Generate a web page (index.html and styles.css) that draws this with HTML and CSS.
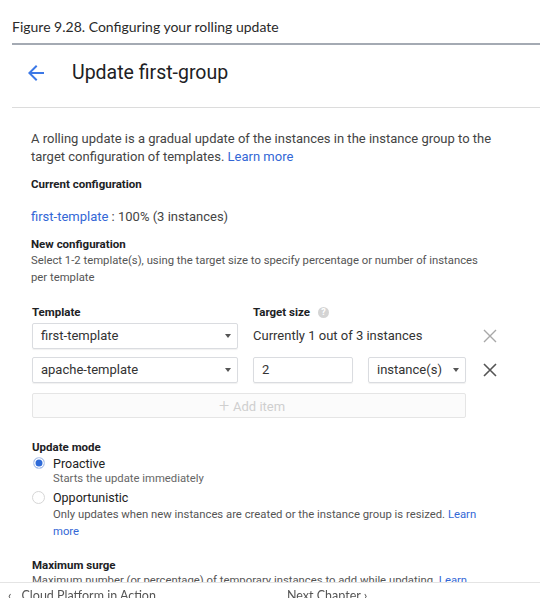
FILE: index.html
```html
<!DOCTYPE html>
<html lang="en">
<head>
<meta charset="utf-8">
<title>Update first-group</title>
<link rel="stylesheet" href="styles.css">
</head>
<body>
<div class="caption">Figure 9.28. Configuring your rolling update</div>
<div class="rule"></div>
<div class="header">
  <svg class="back" width="24" height="24" viewBox="0 0 24 24"><path d="M20 11H7.83l5.59-5.59L12 4l-8 8 8 8 1.41-1.41L7.83 13H20v-2z" fill="#3b78e7"/></svg>
  <h1 class="title">Update first-group</h1>
</div>
<main class="content">
  <p class="intro">A rolling update is a gradual update of the instances in the instance group to the target configuration of templates. <a class="link">Learn more</a></p>
  <div class="label label-current">Current configuration</div>
  <p class="current"><a class="link">first-template</a> : 100% (3 instances)</p>
  <div class="label label-new">New configuration</div>
  <p class="desc desc-new">Select 1-2 template(s), using the target size to specify percentage or number of instances per template</p>

  <div class="grid">
    <div class="label">Template</div>
    <div class="label target-label">Target size <span class="help">?</span></div>
    <div></div>

    <div class="select"><span>first-template</span><span class="caret"></span></div>
    <div class="current-size">Currently 1 out of 3 instances</div>
    <div class="x"><svg width="14" height="14" viewBox="0 0 14 14"><path d="M1 1L13 13M13 1L1 13" stroke="#a8a8a8" stroke-width="1.4"/></svg></div>

    <div class="select"><span>apache-template</span><span class="caret"></span></div>
    <div class="input">2</div>
    <div class="select"><span>instance(s)</span><span class="caret"></span></div>
    <div class="x"><svg width="14" height="14" viewBox="0 0 14 14"><path d="M1 1L13 13M13 1L1 13" stroke="#555" stroke-width="1.6"/></svg></div>

    <div class="add"><span class="plus">+</span>Add item</div>
  </div>

  <div class="label label-mode">Update mode</div>
  <div class="radio-row">
    <span class="radio radio-on"></span><span class="radio-label">Proactive</span>
  </div>
  <div class="radio-help">Starts the update immediately</div>
  <div class="radio-row radio-row-2">
    <span class="radio"></span><span class="radio-label">Opportunistic</span>
  </div>
  <div class="radio-help radio-help-long">Only updates when new instances are created or the instance group is resized. <a class="link">Learn more</a></div>

  <div class="label label-surge">Maximum surge</div>
  <p class="desc desc-surge">Maximum number (or percentage) of temporary instances to add while updating. <a class="link">Learn more</a></p>
</main>
<footer class="footer">
  <span class="prev"><span class="chev">‹</span>Cloud Platform in Action</span>
  <span class="next">Next Chapter ›</span>
</footer>
</body>
</html>
```
FILE: styles.css
```css
html, body { margin: 0; padding: 0; background: #fff; }
body { width: 540px; height: 598px; overflow: hidden; font-family: Roboto, "Liberation Sans", sans-serif; color: #3c4043; }
p { margin: 0; }
.caption { font-family: Lato, "Liberation Sans", sans-serif; font-size: 14px; line-height: 16px; color: #2a2a2a; padding: 19px 12px 0; }
.rule { margin: 8px 0 0 12px; height: 2px; background: #a4aab3; }
.header { display: flex; align-items: center; margin-left: 12px; padding: 16px 0 22px; border-bottom: 1px solid #dcdcdc; }
.back { margin-left: 12px; display: block; }
.title { margin: 0 0 0 24px; font-size: 19.5px; line-height: 24px; font-weight: 400; color: #202124; }
.content { padding: 22px 30px 0 31px; }
.link { color: #3367d6; text-decoration: none; }
.intro { font-size: 13px; line-height: 18px; color: #444; width: 475px; }
.label { font-size: 11.5px; line-height: 16px; font-weight: 700; color: #202124; }
.label-current { margin-top: 10px; }
.current { margin-top: 16px; font-size: 13px; line-height: 18px; color: #444; }
.label-new { margin-top: 11px; line-height: 15px; }
.desc { font-size: 11.3px; line-height: 17px; color: #555; }
.desc-new { width: 462px; }
.grid { display: grid; grid-template-columns: 206px 100px 98px 16px; column-gap: 15px; margin-top: 18px; margin-left: 1px; }
.grid > .label { margin-bottom: 3px; }
.target-label { grid-column: 2 / 4; display: flex; align-items: center; }
.help { display: inline-block; width: 11px; height: 11px; border-radius: 50%; background: #d4d4d4; color: #fff; font-size: 9px; line-height: 11px; text-align: center; margin-left: 8px; font-weight: 700; }
.select, .input { height: 26px; box-sizing: border-box; border: 1px solid #dadce0; border-radius: 2px; box-shadow: 0 1px 1px rgba(0,0,0,0.06); font-size: 13px; line-height: 24px; color: #333; padding-left: 8px; display: flex; align-items: center; justify-content: space-between; padding-right: 6px; margin-bottom: 8px; }
.caret { width: 0; height: 0; border-left: 3.5px solid transparent; border-right: 3.5px solid transparent; border-top: 4px solid #555; }
.current-size { grid-column: 2 / 4; font-size: 13px; line-height: 26px; color: #333; }
.x { display: flex; align-items: center; justify-content: center; height: 26px; margin-left: 1px; }
.add { grid-column: 1 / 4; height: 25px; box-sizing: border-box; border: 1px solid #e5e5e5; border-radius: 2px; background: #fbfbfb; color: #cfcfcf; font-size: 13px; line-height: 23px; text-align: center; margin-top: 2px; padding-left: 6px; }
.plus { font-size: 18px; font-weight: 300; margin-right: 4px; vertical-align: -1px; }
.label-mode { margin-top: 21px; margin-left: 1px; }
.radio-row { display: flex; align-items: center; height: 16px; }
.radio-row-2 { height: 18px; margin-top: 1px; }
.radio { width: 13px; height: 13px; border-radius: 50%; border: 1px solid #d6d6d6; box-sizing: border-box; margin-left: 1px; margin-right: 8px; background: #fff; }
.radio-on { background: #2f6bd8; border: 1px solid #c9d6ee; box-shadow: inset 0 0 0 1.5px #fff; width: 12px; height: 12px; margin-left: 2px; margin-right: 8px; }
.radio-label { font-size: 12.5px; color: #222; }
.radio-help { font-size: 11.3px; line-height: 16px; color: #666; margin-left: 22px; }
.radio-help-long { line-height: 17px; width: 440px; color: #555; }
.label-surge { margin-top: 17px; margin-left: 1px; }
.desc-surge { margin-left: 1px; line-height: 15px; width: 445px; }
.footer { position: fixed; left: 0; right: 0; bottom: 0; height: 15px; background: #fff; border-top: 1px solid #e4e4e4; font-family: Lato, "Liberation Sans", sans-serif; font-size: 12.5px; color: #555; }
.prev { position: absolute; left: 8px; top: 5px; }
.chev { margin-right: 10px; }
.next { position: absolute; left: 287px; top: 5px; }
```
